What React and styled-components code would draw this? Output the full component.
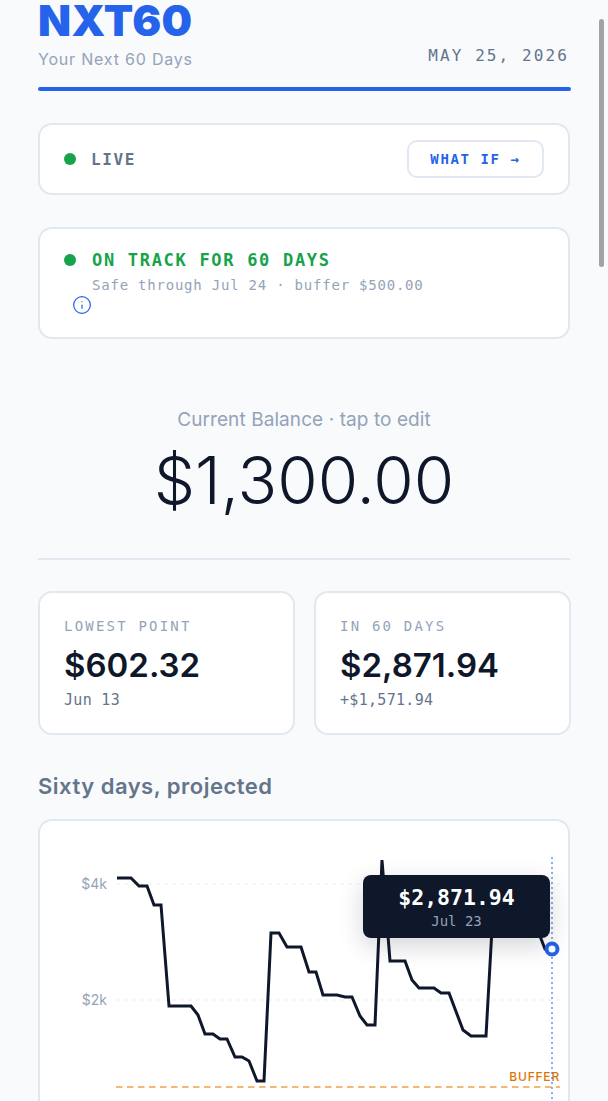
import React from 'react';
import styled, { createGlobalStyle } from 'styled-components';
import { Info } from 'lucide-react';

const SANS = `Inter, "Liberation Sans", sans-serif`;
const MONO = `"DejaVu Sans Mono", "Liberation Mono", monospace`;

const linePoints = [
  [117, 878], [131, 878], [139, 886], [147, 886], [154, 905], [161, 905],
  [169, 1006], [191, 1006], [198, 1015], [205, 1034], [213, 1034], [220, 1039],
  [227, 1039], [235, 1057], [242, 1057], [249, 1061], [257, 1081], [264, 1081],
  [271, 933], [279, 933], [287, 947], [301, 947], [309, 972], [316, 972],
  [323, 995], [337, 995], [345, 997], [352, 997], [360, 1016], [367, 1025],
  [375, 1025], [382, 860], [390, 961], [405, 961], [412, 980], [419, 988],
  [434, 988], [441, 993], [449, 993], [463, 1030], [471, 1036], [486, 1036],
  [493, 911], [508, 911], [515, 920], [530, 920], [538, 931], [545, 949], [552, 949],
];

const App = () => (
  <Page>
    <GlobalStyle />
    <Header>
      <div>
        <Title>NXT60</Title>
        <Subtitle>Your Next 60 Days</Subtitle>
      </div>
      <DateLabel>MAY 25, 2026</DateLabel>
    </Header>
    <HeaderRule />

    <LiveCard>
      <LiveState>
        <Dot />
        <LiveText>LIVE</LiveText>
      </LiveState>
      <WhatIfButton>WHAT IF →</WhatIfButton>
    </LiveCard>

    <StatusCard>
      <StatusRow>
        <StatusDot />
        <StatusText>
          <StatusTitle>ON TRACK FOR 60 DAYS</StatusTitle>
          <StatusDetail>Safe through Jul 24 · buffer $500.00</StatusDetail>
        </StatusText>
      </StatusRow>
      <InfoButton>
        <Info size={20} strokeWidth={1.5} />
      </InfoButton>
    </StatusCard>

    <Balance>
      <BalanceLabel>Current Balance · tap to edit</BalanceLabel>
      <BalanceValue>$1,300.00</BalanceValue>
    </Balance>

    <Stats>
      <StatCard>
        <StatLabel>LOWEST POINT</StatLabel>
        <StatValue>$602.32</StatValue>
        <StatNote>Jun 13</StatNote>
      </StatCard>
      <StatCard>
        <StatLabel>IN 60 DAYS</StatLabel>
        <StatValue>$2,871.94</StatValue>
        <StatNote>+$1,571.94</StatNote>
      </StatCard>
    </Stats>

    <SectionTitle>Sixty days, projected</SectionTitle>

    <ChartCard>
      <ChartSvg viewBox="40 821 528 400">
        <line x1="116" x2="560" y1="884" y2="884" stroke="#f1f5f9" strokeWidth="1.5" strokeDasharray="4 4" />
        <line x1="116" x2="560" y1="1000" y2="1000" stroke="#f1f5f9" strokeWidth="1.5" strokeDasharray="4 4" />
        <AxisLabel x="107" y="889">$4k</AxisLabel>
        <AxisLabel x="107" y="1005">$2k</AxisLabel>
        <line x1="116" x2="560" y1="1087" y2="1087" stroke="#f0a04b" strokeWidth="1.5" strokeDasharray="6.5 4.5" />
        <BufferLabel x="560" y="1081">BUFFER</BufferLabel>
        <line x1="552" x2="552" y1="857" y2="1221" stroke="#2563eb" strokeOpacity="0.7" strokeWidth="1.5" strokeDasharray="2 3" />
        <polyline
          points={linePoints.map((p) => p.join(',')).join(' ')}
          fill="none"
          stroke="#0f172a"
          strokeWidth="3"
          strokeLinejoin="miter"
        />
        <circle cx="552" cy="949" r="5.5" fill="#fff" stroke="#2563eb" strokeWidth="4" />
      </ChartSvg>
      <Tooltip>
        <TooltipValue>$2,871.94</TooltipValue>
        <TooltipDate>Jul 23</TooltipDate>
      </Tooltip>
    </ChartCard>

    <ScrollThumb />
  </Page>
);

const GlobalStyle = createGlobalStyle`
  html, body {
    margin: 0;
    height: 1101px;
    overflow: hidden;
    background: #f8fafc;
  }
`;

const Page = styled.div`
  position: relative;
  box-sizing: border-box;
  height: 1101px;
  padding: 0 37px 0 38px;
  overflow: hidden;
  font-family: ${SANS};
  color: #0f172a;
`;

const Header = styled.header`
  display: flex;
  justify-content: space-between;
  align-items: flex-end;
  padding-right: 2px;
`;

const Title = styled.h1`
  margin: 0;
  font-size: 43px;
  line-height: 41px;
  font-weight: 900;
  letter-spacing: 0.3px;
  color: #2563eb;
`;

const Subtitle = styled.div`
  margin-top: 8px;
  font-size: 16px;
  line-height: 20px;
  letter-spacing: 0.8px;
  color: #94a3b8;
`;

const DateLabel = styled.div`
  font-family: ${MONO};
  font-size: 16px;
  line-height: 20px;
  letter-spacing: 2.1px;
  color: #64748b;
  margin-bottom: 3px;
`;

const HeaderRule = styled.div`
  height: 4px;
  margin-top: 18px;
  border-radius: 3px;
  background: #2563eb;
`;

const Card = styled.div`
  box-sizing: border-box;
  background: #fff;
  border: 2px solid #e2e8f0;
  border-radius: 14px;
`;

const LiveCard = styled(Card)`
  display: flex;
  justify-content: space-between;
  align-items: center;
  height: 72px;
  margin: 32px 1px 0 0;
  padding: 0 24px;
`;

const LiveState = styled.div`
  display: flex;
  align-items: center;
  gap: 15px;
`;

const Dot = styled.span`
  flex: none;
  width: 12px;
  height: 12px;
  border-radius: 50%;
  background: #16a34a;
`;

const StatusDot = styled(Dot)`
  margin-top: 5px;
`;

const LiveText = styled.span`
  font-family: ${MONO};
  font-size: 16px;
  font-weight: 700;
  letter-spacing: 1.6px;
  color: #64748b;
`;

const WhatIfButton = styled.button`
  width: 137px;
  height: 38px;
  padding: 0;
  background: #fff;
  border: 2px solid #e2e8f0;
  border-radius: 10px;
  font-family: ${MONO};
  font-size: 14px;
  font-weight: 700;
  letter-spacing: 1.6px;
  color: #2563eb;
`;

const StatusCard = styled(Card)`
  height: 112px;
  margin: 32px 1px 0 0;
  padding: 20px 24px 0;
`;

const StatusRow = styled.div`
  display: flex;
  gap: 16px;
`;

const StatusText = styled.div`
  min-width: 0;
`;

const StatusTitle = styled.div`
  font-family: ${MONO};
  font-size: 17px;
  line-height: 22px;
  font-weight: 700;
  letter-spacing: 1.7px;
  color: #16a34a;
`;

const StatusDetail = styled.div`
  margin-top: 5px;
  font-family: ${MONO};
  font-size: 14px;
  line-height: 18px;
  letter-spacing: 0.78px;
  color: #94a3b8;
`;

const InfoButton = styled.span`
  display: block;
  width: 20px;
  height: 20px;
  margin: 1px 0 0 8px;
  color: #2563eb;

  svg {
    display: block;
  }
`;

const Balance = styled.section`
  margin-right: 1px;
  padding: 69px 0 36px;
  border-bottom: 2px solid #e2e8f0;
  text-align: center;
`;

const BalanceLabel = styled.div`
  font-size: 19px;
  line-height: 24px;
  letter-spacing: 0.08px;
  color: #94a3b8;
`;

const BalanceValue = styled.div`
  margin-top: 8px;
  font-size: 65.5px;
  line-height: 82px;
  font-weight: 300;
  color: #0f172a;
`;

const Stats = styled.section`
  display: grid;
  grid-template-columns: 257px 257px;
  gap: 19px;
  margin-top: 31px;
`;

const StatCard = styled(Card)`
  height: 144px;
  padding: 24px 24px 0;
`;

const StatLabel = styled.div`
  font-family: ${MONO};
  font-size: 14px;
  line-height: 18px;
  letter-spacing: 2.2px;
  color: #94a3b8;
`;

const StatValue = styled.div`
  margin-top: 10px;
  font-size: 33px;
  line-height: 40px;
  font-weight: 600;
  color: #0f172a;
`;

const StatNote = styled.div`
  margin-top: 6px;
  font-family: ${MONO};
  font-size: 15px;
  line-height: 18px;
  letter-spacing: 0.3px;
  color: #64748b;
`;

const SectionTitle = styled.h2`
  margin: 36px 0 0;
  font-size: 22px;
  line-height: 30px;
  font-weight: 600;
  letter-spacing: 0.5px;
  color: #64748b;
`;

const ChartCard = styled(Card)`
  position: relative;
  margin: 18px 1px 0 0;
  height: 402px;
  overflow: hidden;
`;

const ChartSvg = styled.svg`
  display: block;
  width: 528px;
  height: 400px;
`;

const AxisLabel = styled.text`
  font-family: ${SANS};
  font-size: 14px;
  text-anchor: end;
  fill: #94a3b8;
`;

const BufferLabel = styled.text`
  font-family: ${SANS};
  font-size: 12px;
  font-weight: 500;
  letter-spacing: 0.8px;
  text-anchor: end;
  fill: #d97706;
`;

const Tooltip = styled.div`
  position: absolute;
  left: 323px;
  top: 54px;
  box-sizing: border-box;
  width: 187px;
  height: 63px;
  padding-top: 9px;
  border-radius: 8px;
  background: #0f172a;
  box-shadow: 0 8px 24px rgba(15, 23, 42, 0.18);
  text-align: center;
`;

const TooltipValue = styled.div`
  font-family: ${MONO};
  font-size: 21.5px;
  line-height: 28px;
  font-weight: 700;
  color: #fff;
`;

const TooltipDate = styled.div`
  font-family: ${MONO};
  font-size: 14px;
  line-height: 18px;
  color: #94a3b8;
`;

const ScrollThumb = styled.div`
  position: absolute;
  left: 599px;
  top: 19px;
  width: 5px;
  height: 248px;
  border-radius: 3px;
  background: #a3a3a3;
`;

export default App;
